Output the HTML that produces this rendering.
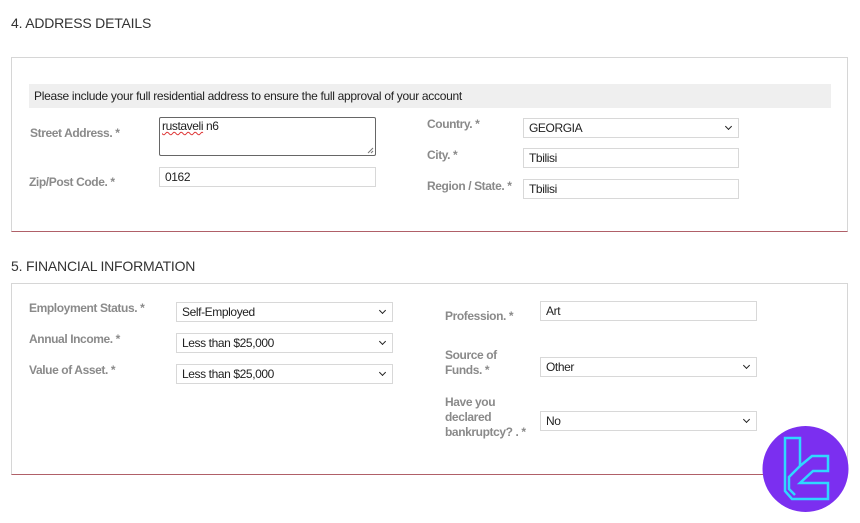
<!DOCTYPE html>
<html><head><style>
body{margin:0;width:860px;height:523px;background:#fff;font-family:"Liberation Sans",sans-serif;position:relative;overflow:hidden}
.a{position:absolute}
h2{position:absolute;margin:0;font-weight:normal;font-size:14px;letter-spacing:-0.2px;color:#333;left:11px}
.box{position:absolute;left:11px;width:837px;border:1px solid #d6d6d6;border-bottom:1px solid #b06068;box-sizing:border-box}
.l{position:absolute;font-size:12px;letter-spacing:-0.4px;font-weight:bold;color:#8a8a8a;line-height:15px}
.i{position:absolute;height:20px;border:1px solid #d8d8d8;box-sizing:border-box;font-size:12px;letter-spacing:-0.4px;color:#222;padding-left:5px;line-height:18px;background:#fff}
.s:after{content:"";position:absolute;right:7px;top:5px;width:4px;height:4px;border-right:1.6px solid #222;border-bottom:1.6px solid #222;transform:rotate(45deg)}
</style></head><body>
<h2 style="top:15px">4. ADDRESS DETAILS</h2>
<div class="box" style="top:57px;height:175px"></div>
<div class="a" style="left:29px;top:84px;width:802px;height:24px;background:#efefef;font-size:12px;letter-spacing:-0.3px;color:#222;line-height:24px;padding-left:5px;box-sizing:border-box">Please include your full residential address to ensure the full approval of your account</div>
<div class="l" style="left:30px;top:126px">Street Address. *</div>
<div class="i" style="left:159px;top:117px;width:217px;height:39px;border:1px solid #666;border-radius:2px;line-height:16px;padding-left:2px"><span style="text-decoration:underline wavy #d33;text-decoration-thickness:1px">rustaveli</span> n6
<svg class="a" style="right:1px;bottom:1px" width="7" height="7"><path d="M1 6 L6 1 M4 6 L6 4" stroke="#777" stroke-width="1"/></svg></div>
<div class="l" style="left:29px;top:175px">Zip/Post Code. *</div>
<div class="i" style="left:159px;top:167px;width:217px">0162</div>
<div class="l" style="left:427px;top:117px">Country. *</div>
<div class="i s" style="left:523px;top:118px;width:216px">GEORGIA</div>
<div class="l" style="left:427px;top:148px">City. *</div>
<div class="i" style="left:523px;top:148px;width:216px">Tbilisi</div>
<div class="l" style="left:427px;top:179px">Region / State. *</div>
<div class="i" style="left:523px;top:179px;width:216px">Tbilisi</div>

<h2 style="top:258px">5. FINANCIAL INFORMATION</h2>
<div class="box" style="top:283px;height:192px"></div>
<div class="l" style="left:29px;top:301px">Employment Status. *</div>
<div class="i s" style="left:176px;top:302px;width:217px">Self-Employed</div>
<div class="l" style="left:29px;top:332px">Annual Income. *</div>
<div class="i s" style="left:176px;top:333px;width:217px">Less than $25,000</div>
<div class="l" style="left:29px;top:363px">Value of Asset. *</div>
<div class="i s" style="left:176px;top:364px;width:217px">Less than $25,000</div>
<div class="l" style="left:445px;top:309px">Profession. *</div>
<div class="i" style="left:540px;top:301px;width:217px">Art</div>
<div class="l" style="left:445px;top:348px">Source of<br>Funds. *</div>
<div class="i s" style="left:540px;top:357px;width:217px">Other</div>
<div class="l" style="left:445px;top:395px">Have you<br>declared<br>bankruptcy? . *</div>
<div class="i s" style="left:540px;top:411px;width:217px">No</div>

<svg class="a" style="left:760px;top:424px" width="90" height="90" viewBox="760 424 90 90">
<circle cx="805.5" cy="469" r="43" fill="#7b2ff0"/>
<path d="M785 438 L800 438 L800 466 L812 456 L828 456 L828 471 L813 471 L800 483 L828 483 L828 499 L792 499 L785 491 L785 468 L785 438 Z" fill="none" stroke="#2fd8ff" stroke-width="2.5" stroke-linejoin="miter"/>
<path d="M800 466 L789 477 L789 489 L795 495" fill="none" stroke="#2fd8ff" stroke-width="2.5"/>
</svg>
</body></html>
